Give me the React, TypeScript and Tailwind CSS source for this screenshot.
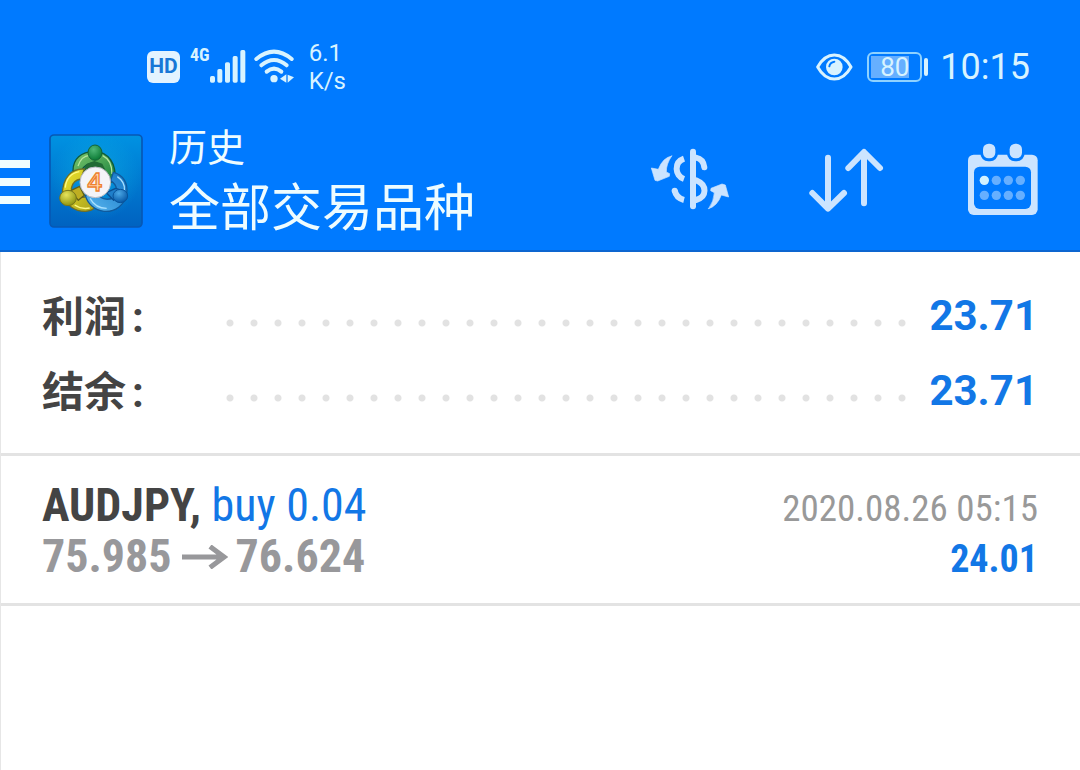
import React from 'react';

function SignalIcon() {
  return (
    <svg className="h-[35px] w-9" viewBox="207 43 108 105" fill="#d8f3ff" aria-hidden="true">
      <rect x="207" y="121" width="15" height="20" rx="5" />
      <rect x="229" y="100" width="15" height="41" rx="5" />
      <rect x="252" y="80" width="15" height="61" rx="5" />
      <rect x="275" y="61" width="15" height="80" rx="5" />
      <rect x="298" y="43" width="15" height="98" rx="5" />
    </svg>
  );
}

function WifiIcon() {
  return (
    <svg className="h-[35px] w-[41px] overflow-visible" viewBox="340 43 123 105" fill="none" stroke="#d8f3ff" strokeWidth="12" strokeLinecap="round" aria-hidden="true">
      <path d="M347 70 Q400 26 453 70" />
      <path d="M362 89 Q400 57 438 89" />
      <path d="M378 108 Q400 90 422 108" />
      <circle cx="400" cy="129" r="11" fill="#d8f3ff" stroke="none" />
      <path d="M437 116v25l-19-12zM441 117v24l19-16z" fill="#d8f3ff" stroke="none" />
    </svg>
  );
}

function EyeIcon() {
  return (
    <svg className="h-7 w-[37px]" viewBox="50 37 111 84" aria-hidden="true">
      <path d="M55 79 Q75 43 105 43 Q135 43 155 79 Q135 115 105 115 Q75 115 55 79Z" fill="none" stroke="#d8f3ff" strokeWidth="9" strokeLinejoin="round" />
      <circle cx="105" cy="79" r="25" fill="#d8f3ff" />
      <path d="M90 77 Q92 65 105 63" fill="none" stroke="#007aff" strokeWidth="6" strokeLinecap="round" />
    </svg>
  );
}

function AppLogo() {
  return (
    <svg className="size-[94px] shrink-0" viewBox="148 23 282 282" role="img" aria-label="MetaTrader 4">
      <defs>
        <linearGradient id="tile" x1="0" y1="0" x2="0" y2="1">
          <stop offset="0" stopColor="#0092e2" />
          <stop offset="1" stopColor="#0062c0" />
        </linearGradient>
        <radialGradient id="glow" cx=".5" cy=".45" r=".5">
          <stop offset="0" stopColor="#0cb3e4" stopOpacity=".6" />
          <stop offset="1" stopColor="#0cb3e4" stopOpacity="0" />
        </radialGradient>
        <linearGradient id="green" x1="0" y1="0" x2="1" y2="1">
          <stop offset="0" stopColor="#7cc66c" />
          <stop offset="1" stopColor="#16803c" />
        </linearGradient>
        <linearGradient id="gold" x1="0" y1="0" x2="1" y2="1">
          <stop offset="0" stopColor="#f0e62c" />
          <stop offset="1" stopColor="#a8a01c" />
        </linearGradient>
        <linearGradient id="azure" x1="0" y1="1" x2="1" y2="0">
          <stop offset="0" stopColor="#5cb8f0" />
          <stop offset="1" stopColor="#1174c4" />
        </linearGradient>
        <radialGradient id="greenBall" cx=".4" cy=".3" r=".7">
          <stop offset="0" stopColor="#4fb877" />
          <stop offset="1" stopColor="#0b7a35" />
        </radialGradient>
        <radialGradient id="goldBall" cx=".4" cy=".3" r=".7">
          <stop offset="0" stopColor="#e6e45c" />
          <stop offset="1" stopColor="#8f9410" />
        </radialGradient>
        <radialGradient id="azureBall" cx=".4" cy=".3" r=".7">
          <stop offset="0" stopColor="#4ba8e6" />
          <stop offset="1" stopColor="#0759a8" />
        </radialGradient>
      </defs>
      <rect x="151" y="26" width="276" height="276" rx="12" fill="url(#tile)" stroke="#0758b4" strokeWidth="5" />
      <rect x="156" y="31" width="266" height="266" rx="9" fill="url(#glow)" />
      <path d="M220 133 C220 97 244 76 284 76 C326 76 351 111 346 165 L322 171 C321 130 306 111 284 110 C264 110 254 117 244 134Z" fill="url(#green)" stroke="#115a38" strokeWidth="4" />
      <path d="M235 119 C242 97 257 88 269 87 M309 88 C326 96 337 116 337 143" fill="none" stroke="#b7e59f" strokeWidth="4" />
      <path d="M262 112 L284 104 L308 112 L326 150 L300 140 H262 L248 134Z" fill="#226b35" />
      <path d="M254 128 C216 126 188 153 188 207 C203 240 227 256 258 255 C273 254 282 248 288 242 L263 210 C239 219 216 204 215 186 C218 168 229 160 244 158Z" fill="url(#gold)" stroke="#716e24" strokeWidth="4" />
      <path d="M239 136 C213 141 199 160 197 184 M225 236 C238 245 256 248 270 245" fill="none" stroke="#fff983" strokeWidth="4" />
      <path d="M341 138 C371 145 386 171 381 203 C375 236 346 258 313 255 C284 252 264 232 257 207 L288 194 C299 216 316 224 341 215 C356 200 355 177 333 163Z" fill="url(#azure)" stroke="#105a9d" strokeWidth="4" />
      <path d="M271 216 C282 236 299 246 321 246 M353 151 C369 162 376 176 374 192" fill="none" stroke="#a8e0ff" strokeWidth="4" />
      <path d="M213 193 L240 180 L254 207 L236 222Z" fill="#bfae22" stroke="#625f16" strokeWidth="4" strokeLinejoin="round" />
      <path d="M320 199 L348 186 L366 192 L342 222Z" fill="#1f7fca" stroke="#0b4f92" strokeWidth="4" strokeLinejoin="round" />
      <ellipse cx="286" cy="79" rx="21" ry="23" fill="url(#greenBall)" stroke="#146236" strokeWidth="3" />
      <ellipse cx="205" cy="215" rx="25" ry="23" fill="url(#goldBall)" stroke="#77751c" strokeWidth="3" />
      <ellipse cx="362" cy="209" rx="22" ry="20" fill="url(#azureBall)" stroke="#08539b" strokeWidth="3" />
      <circle cx="287" cy="168" r="46" fill="#f4f4f8" stroke="#b9bac2" strokeWidth="3" />
      <text x="285" y="194" textAnchor="middle" fill="#ffd9b0" stroke="#ef812e" strokeWidth="4" className="font-['Open_Sans',sans-serif] text-[76px] font-semibold">4</text>
    </svg>
  );
}

function CurrencyIcon() {
  return (
    <svg className="size-20 overflow-visible" viewBox="24 15 240 240" fill="none" stroke="#cce4ff" strokeWidth="18" strokeLinecap="round" aria-hidden="true">
      <path d="M159 47 V211" strokeWidth="18" />
      <path d="M168 65 Q190 69 193 94" />
      <path d="M132 68 C101 79 104 119 132 129" strokeLinecap="butt" />
      <path d="M168 133 C203 147 201 183 168 192" />
      <path d="M104 163 Q108 186 132 192" strokeLinecap="butt" />
      <circle cx="104" cy="164" r="9" fill="#cce4ff" stroke="none" />
      <path d="M95 60 Q68 65 55 100 L34 96 L45 133 L53 135 L88 121 L89 113 L79 108 Q78 85 95 60Z" fill="#cce4ff" stroke="#cce4ff" strokeWidth="2" strokeLinejoin="round" />
      <path d="M206 218 Q232 210 244 177 L266 183 L256 147 L246 144 L213 157 L212 164 L223 170 Q222 195 206 218Z" fill="#cce4ff" stroke="#cce4ff" strokeWidth="2" strokeLinejoin="round" />
    </svg>
  );
}

function SortIcon() {
  return (
    <svg className="size-20" viewBox="504 15 240 240" fill="none" stroke="#cce4ff" strokeWidth="18" strokeLinecap="round" strokeLinejoin="round" aria-hidden="true">
      <path d="M564 65 V215 M517 171 L564 218 L612 171" />
      <path d="M672 202 V50 M625 96 L672 48 L720 96" />
    </svg>
  );
}

function CalendarIcon() {
  const columns = [103, 139, 175, 211];
  return (
    <svg className="h-20 w-[70px]" viewBox="54 30 210 240" aria-hidden="true">
      <rect x="54" y="71" width="209" height="181" rx="17" fill="#cce4ff" />
      <rect x="72" y="107" width="171" height="127" rx="17" fill="#007aff" />
      <rect x="91" y="31" width="53" height="60" rx="24" fill="#007aff" />
      <rect x="171" y="31" width="53" height="60" rx="24" fill="#007aff" />
      <rect x="99" y="38" width="37" height="44" rx="17" fill="#cce4ff" />
      <rect x="179" y="38" width="37" height="44" rx="17" fill="#cce4ff" />
      {columns.map((x) => (
        <g key={x}>
          <circle cx={x} cy="148" r="14" fill={x === 103 ? '#d3f2ff' : '#66afff'} />
          <circle cx={x} cy="193" r="14" fill="#66afff" />
        </g>
      ))}
    </svg>
  );
}

function StatusBar() {
  return (
    <div className="flex h-32 items-center justify-between pt-1.5 pr-[50px] pl-[147px] text-[#d8f3ff]">
      <div className="flex items-center">
        <span className="flex h-8 w-[33px] items-center justify-center rounded-md bg-[#e3f3ff] text-[21px] font-bold text-[#1877d6]">HD</span>
        <span className="ml-2.5 self-start pt-1 font-['Roboto_Condensed',Roboto,sans-serif] text-lg leading-6 font-bold">4G</span>
        <SignalIcon />
        <span className="ml-2"><WifiIcon /></span>
        <div className="ml-3.5 text-2xl leading-7">
          <div>6.1</div>
          <div>K/s</div>
        </div>
      </div>
      <div className="flex items-center">
        <EyeIcon />
        <div className="ml-3.5 flex h-[30px] w-[55px] items-center rounded-md border-2 border-[#8fd2ff] p-0.5">
          <span className="flex h-full w-full items-center justify-center bg-[linear-gradient(to_right,#66afff_80%,transparent_80%)] text-[26px] leading-none">80</span>
        </div>
        <div className="ml-0.5 h-[18px] w-1 rounded-sm bg-[#d8f3ff]" />
        <time className="ml-3 text-4xl">10:15</time>
      </div>
    </div>
  );
}

function Toolbar() {
  return (
    <div className="flex h-[106px] items-center pr-[42px]">
      <button type="button" aria-label="Menu" className="flex w-[30px] flex-col gap-2.5 pt-0.5">
        <span className="h-2 w-full bg-[#f0fdff]" />
        <span className="h-2 w-full bg-[#f0fdff]" />
        <span className="h-2 w-full bg-[#f0fdff]" />
      </button>
      <div className="ml-[19px]"><AppLogo /></div>
      <div className="ml-[26px] pt-2 text-[#eefcff]">
        <h1 className="text-[38px] leading-[48px]">历史</h1>
        <p className="text-[51px] leading-[74px]">全部交易品种</p>
      </div>
      <div className="ml-auto flex items-center gap-20">
        <button type="button" aria-label="Currency"><CurrencyIcon /></button>
        <button type="button" aria-label="Sort"><SortIcon /></button>
        <button type="button" aria-label="Calendar"><CalendarIcon /></button>
      </div>
    </div>
  );
}

function SummaryRow({ label, value }: { label: string; value: string }) {
  return (
    <div className="flex h-[75px] items-center">
      <dt className="w-[176px] pt-1 text-[42px] leading-none font-bold text-[#444]">
        {label}<span className="ml-1.5">:</span>
      </dt>
      <dd className="flex flex-1 items-center">
        <span className="mt-3.5 h-2 flex-1 bg-[radial-gradient(circle,#e2e2e2_3px,transparent_4px)] bg-[length:24px_8px]" />
        <span className="ml-4 text-[42px] leading-none font-bold text-[#1277e6]">{value}</span>
      </dd>
    </div>
  );
}

export default function App() {
  return (
    <div className="min-h-screen bg-white font-[Roboto,'Noto_Sans_CJK_SC',sans-serif]">
      <header className="border-b-2 border-[#0d66d0] bg-[#007aff] pb-4">
        <StatusBar />
        <Toolbar />
      </header>
      <main className="min-h-[518px] border-l border-[#e6e6e6]">
        <dl className="border-b-3 border-[#e3e3e3] pt-[26px] pr-[42px] pb-[25px] pl-[41px]">
          <SummaryRow label="利润" value="23.71" />
          <SummaryRow label="结余" value="23.71" />
        </dl>
        <ul>
          <li className="border-b-3 border-[#e3e3e3] pt-6 pr-[42px] pb-[21px] pl-[41px] font-['Roboto_Condensed',Roboto,sans-serif] leading-[51px]">
            <div className="flex h-[51px] items-baseline justify-between">
              <span className="text-[46px] leading-[51px] text-[#1277e6]">
                <strong className="font-bold text-[#444]">AUDJPY,</strong> buy 0.04
              </span>
              <time className="text-[37px] leading-[51px] text-[#999]">2020.08.26 05:15</time>
            </div>
            <div className="flex h-[51px] items-baseline justify-between">
              <span className="flex items-center text-[46px] leading-[51px] font-bold text-[#98989b]">
                75.985
                <svg className="mr-2 ml-2.5 h-6 w-[46px]" viewBox="0 0 46 24" fill="none" stroke="#98989b" strokeWidth="5" role="img" aria-label="to">
                  <path d="M0 12 H42 M28 1.5 L42 12 L28 22.5" />
                </svg>
                76.624
              </span>
              <span className="text-[38px] leading-[51px] font-bold text-[#1277e6]">24.01</span>
            </div>
          </li>
        </ul>
      </main>
    </div>
  );
}
